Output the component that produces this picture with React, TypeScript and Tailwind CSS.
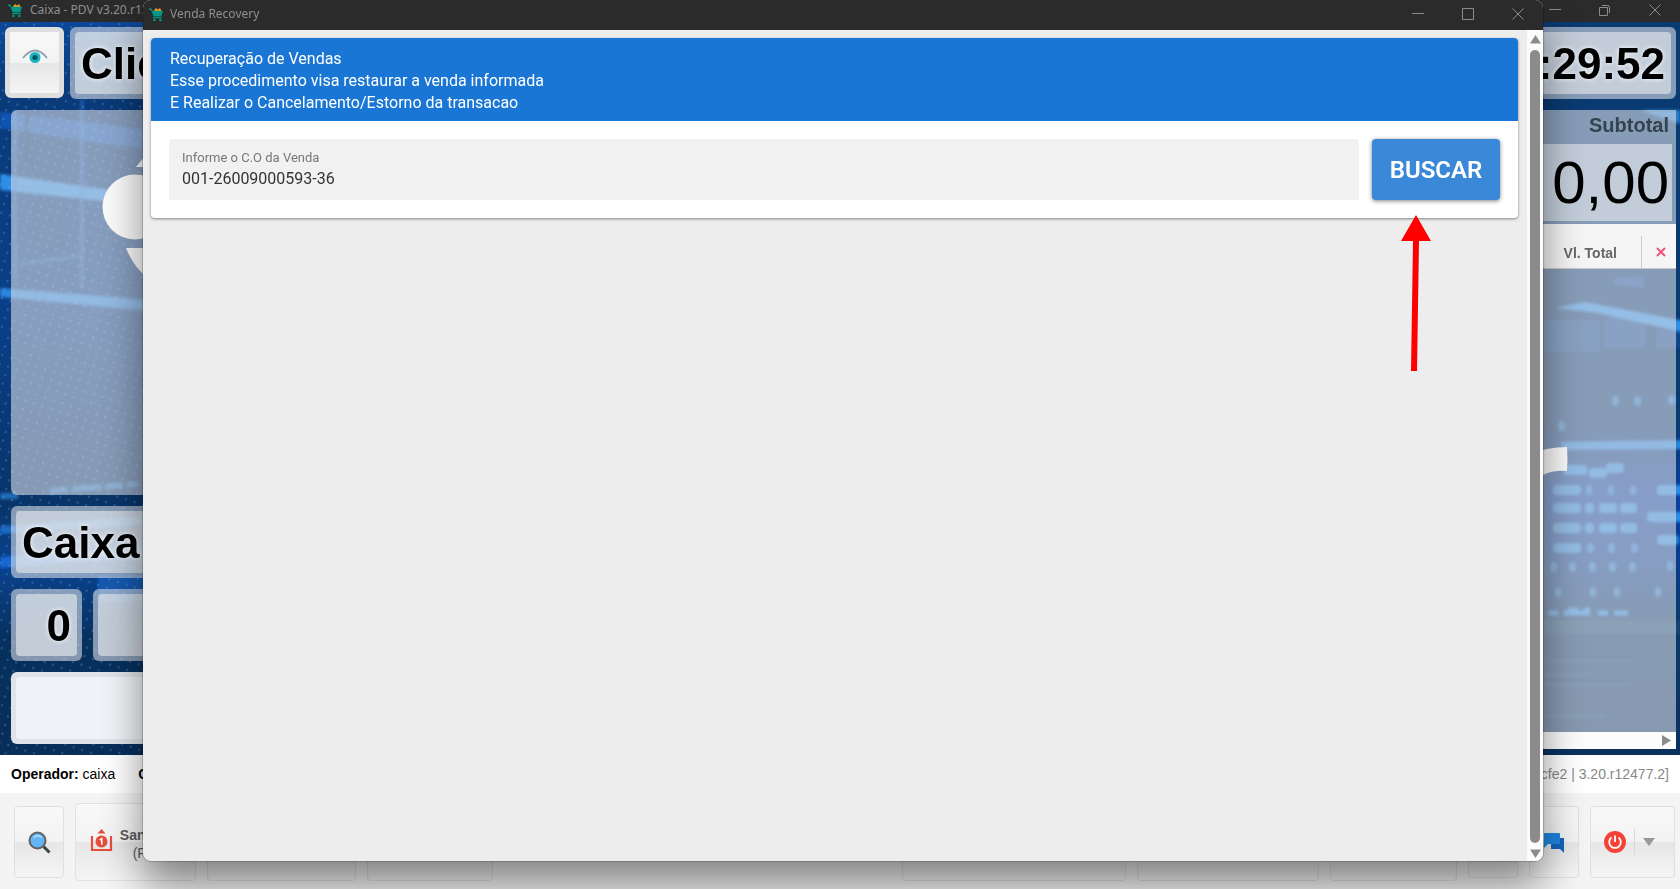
import { useState } from "react";
import type { ReactNode } from "react";

const panel =
  "rounded-md bg-[#dadee6]/60 p-[5px] text-[44px] font-bold leading-none text-black";
const panelInner =
  "flex h-full items-center rounded bg-[#ebeef0]/60 px-[6px] pt-[2px] [text-shadow:0_0_5px_#fff]";
const toolButton =
  "flex shrink-0 items-center justify-center rounded border border-[#e0e0e0] bg-[linear-gradient(#f8f8f8,#f3f3f3_50%,#e6e6e6_50%,#f5f5f5)]";

function CartIcon() {
  return (
    <svg width="15" height="15" viewBox="0 0 15 15" className="shrink-0">
      <path d="M5 3.5 7 1l2 1.5L11 1l1.5 3H5z" fill="#f39a1e" />
      <path d="M0 1.5h2.6l.8 2.2H14l-1.6 5.6H4.6L2 3H0z" fill="#009688" />
      <path d="M4.3 9.8h8.4v1.4H4z" fill="#009688" />
      <circle cx="5.4" cy="13" r="1.3" fill="#009688" />
      <circle cx="11.4" cy="13" r="1.3" fill="#009688" />
    </svg>
  );
}

function WindowControls({ restored }: { restored?: boolean }) {
  const control = "flex h-full w-[50px] items-center justify-center";
  return (
    <div className="flex h-full text-[#8c8c8c]">
      <button className={control} aria-label="Minimizar">
        <svg width="12" height="12" viewBox="0 0 12 12" stroke="currentColor">
          <path d="M0 5.5h12" />
        </svg>
      </button>
      <button className={control} aria-label="Maximizar">
        <svg width="12" height="12" viewBox="0 0 12 12" fill="none" stroke="currentColor">
          {restored ? (
            <path d="M.5 3.5h8v8h-8zM3 1.5h5.5a2 2 0 0 1 2 2V9" />
          ) : (
            <path d="M.5.5h11v11H.5z" />
          )}
        </svg>
      </button>
      <button className={control} aria-label="Fechar">
        <svg width="12" height="12" viewBox="0 0 12 12" stroke="currentColor">
          <path d="m.5.5 11 11m0-11-11 11" />
        </svg>
      </button>
    </div>
  );
}

function TitleBar({ children, className }: { children: ReactNode; className: string }) {
  return (
    <header
      className={`flex shrink-0 items-center justify-between bg-[#2b2b2b] pb-[2px] font-['Noto_Sans',sans-serif] text-xs text-[#8f8f8f] ${className}`}
    >
      {children}
    </header>
  );
}

const lights = [
  [1553, 490, 28], [1586, 490, 6], [1608, 490, 6], [1630, 490, 6], [1657, 490, 84],
  [1553, 508, 28], [1585, 508, 9], [1599, 508, 18], [1620, 508, 17], [1647, 517, 40],
  [1553, 528, 28], [1585, 528, 9], [1599, 528, 18], [1620, 528, 17], [1657, 540, 22],
  [1553, 548, 28], [1587, 548, 7], [1608, 548, 7], [1631, 548, 7],
  [1550, 567, 7], [1569, 567, 7], [1589, 567, 7], [1609, 567, 7], [1629, 567, 7],
  [1667, 566, 6], [1555, 592, 6], [1590, 592, 6], [1614, 592, 6], [1655, 592, 6],
  [1612, 401, 7], [1634, 401, 7], [1668, 400, 7], [1558, 426, 7],
  [1563, 470, 24], [1589, 473, 18], [1606, 468, 18],
];

function Backdrop() {
  return (
    <svg
      className="absolute inset-0 h-full w-full"
      viewBox="0 22 1680 733"
      preserveAspectRatio="none"
    >
      <defs>
        <linearGradient id="sky" x1="0" y1="0" x2="0" y2="1">
          <stop offset="0" stopColor="#0c4798" />
          <stop offset=".1" stopColor="#0a3a78" />
          <stop offset=".4" stopColor="#0a3f88" />
          <stop offset=".66" stopColor="#083468" />
          <stop offset=".74" stopColor="#0a4390" />
          <stop offset=".84" stopColor="#07305e" />
          <stop offset="1" stopColor="#082e5a" />
        </linearGradient>
        <linearGradient id="room" x1="0" y1="0" x2="0" y2="1">
          <stop offset="0" stopColor="#0a3a72" />
          <stop offset=".55" stopColor="#0a3a72" />
          <stop offset=".65" stopColor="#0a3fa0" />
          <stop offset=".74" stopColor="#0a3c8a" />
          <stop offset=".82" stopColor="#0b3a6a" />
          <stop offset="1" stopColor="#09325e" />
        </linearGradient>
        <pattern
          id="dots"
          width="9"
          height="9"
          patternUnits="userSpaceOnUse"
          patternTransform="rotate(18)"
        >
          <circle cx="4" cy="4" r="1.2" fill="#6fb0ee" opacity=".3" />
        </pattern>
        <filter id="soft">
          <feGaussianBlur stdDeviation="1.6" />
        </filter>
      </defs>
      <rect y="22" width="800" height="733" fill="url(#sky)" />
      <rect x="800" y="22" width="880" height="733" fill="url(#room)" />
      <g filter="url(#soft)">
        <path d="M0 112 150 130v20L0 128z" fill="#1560cc" opacity=".7" />
        <path d="M0 174 150 196v10L0 190z" fill="#2f8fe6" />
        <path d="M0 288 150 300v11L0 297z" fill="#2a86de" />
        <path d="M82 99v190M15 110v170" stroke="#2a74d4" strokeWidth="4" opacity=".5" />
        <path d="M20 264 80 256" stroke="#2a74d4" strokeWidth="3" opacity=".5" />
        <path d="M27 112v50" stroke="#0a2c5c" strokeWidth="4" opacity=".6" />
        <path d="M0 496h20M50 491 138 484" stroke="#2a86de" strokeWidth="6" opacity=".7" strokeDasharray="18 4 30 3" />
        <path d="M0 526 150 516v8L0 534z" fill="#2580e6" opacity=".7" />
        <path d="M0 557 150 546v10L0 568z" fill="#1672e6" opacity=".8" />
        <path d="M98 576h50v26H98z" fill="#1b6ccc" opacity=".6" />
        <path d="M1540 320v32h60v-32zM1604 318v30h42v-34zM1656 330h24v18h-24z" fill="#1652a8" opacity=".5" />
        <path d="M1555 308 1585 302 1690 322v12L1598 313z" fill="#2f8fe6" />
        <path d="M1614 278l30-2v12l-30-4z" fill="#1d5cc0" opacity=".6" />
        <path d="M1640 110h40v14z" fill="#2f8fe6" opacity=".8" />
        <path d="M1560 442 1690 440v9L1564 450z" fill="#2a86de" />
        <path d="M1548 613h80M1568 610h22" stroke="#2f8fe6" strokeWidth="5" strokeDasharray="10 6 26 8" />
        <path d="M1543 620h137v14h-137z" fill="#1d5278" opacity=".5" />
        <path d="M1545 661h90M1545 675h45M1545 685h85M1545 716h60" stroke="#1d5580" strokeWidth="3" opacity=".5" />
        {lights.map(([x, y, w]) => (
          <rect
            key={`${x}-${y}`}
            x={x}
            y={y - 5}
            width={w}
            height="10"
            rx="4"
            fill="#2f93ea"
            opacity={w < 8 ? 0.7 : 0.9}
          />
        ))}
      </g>
      <rect y="22" width="800" height="733" fill="url(#dots)" />
    </svg>
  );
}

/* Brand mark that sits over both columns */
function Watermark() {
  return (
    <svg
      className="pointer-events-none absolute inset-0 h-full w-full"
      viewBox="0 22 1680 733"
      preserveAspectRatio="none"
      fill="#fafafa"
    >
      <circle cx="135" cy="207" r="32.5" />
      <path d="M136 167 150 150v17z" />
      <path d="M126 248h30v30h-8q-14-10-22-30z" />
      <path d="M1530 454q18-7 37-7 1 12 0 24-14-1-24 4h-13z" />
    </svg>
  );
}

function Register() {
  return (
    <div className="relative flex min-h-0 flex-1 flex-col">
      <Backdrop />
      <div className="relative flex gap-[6px] pt-[5px] pr-1 pl-[5px]">
        <button
          aria-label="Visualizar"
          className="flex h-[71px] w-[59px] items-center justify-center rounded-md border-[5px] border-[#dedede] bg-[linear-gradient(#f8f8f8,#f3f3f3_50%,#e6e6e6_50%,#f5f5f5)] pb-3"
        >
          <svg width="26" height="18" viewBox="0 0 26 18">
            <path d="M2 9Q13-2 24 9 13 19 2 9z" fill="#f3f8fa" />
            <circle cx="13" cy="9.500" r="5.500" fill="#1fb4c4" />
            <circle cx="13" cy="9.500" r="2.600" fill="#00565f" />
            <path d="M1 10Q13-5 25 10" fill="none" stroke="#90a4ae" strokeWidth="2" />
          </svg>
        </button>
        <div className={`${panel} h-[72px] flex-1`}>
          <div className={panelInner}>Clie</div>
        </div>
        <div className={`${panel} h-[72px] w-[300px]`}>
          <div className={`${panelInner} justify-end`}>08:29:52</div>
        </div>
      </div>

      <div className="relative mt-[11px] flex min-h-0 flex-1 gap-[11px] pr-1 pl-[11px]">
        <div className="flex w-[430px] flex-col gap-[11px] pb-[11px]">
          <div className="flex-1 rounded-md bg-[#dadee6]/60" />
          <div className={`${panel} h-[72px]`}>
            <div className={panelInner}>Caixa</div>
          </div>
          <div className="flex gap-[11px]">
            <div className={`${panel} h-[72px] w-[71px]`}>
              <div className={`${panelInner} justify-end`}>0</div>
            </div>
            <div className={`${panel} h-[72px] flex-1`}>
              <div className={panelInner} />
            </div>
          </div>
          <div className="h-[72px] rounded-md bg-[#e0e4ea] p-[5px]">
            <div className="h-full rounded bg-[#eff2f6]" />
          </div>
        </div>

        <div className="mb-[6px] flex min-w-0 flex-1 flex-col">
          <div className="bg-[#dadee6]/60 pr-1 pb-[3px]">
            <div className="flex h-[34px] items-center justify-end pr-[3px] pb-1 text-xl font-bold text-[#34444f]">
              Subtotal
            </div>
            <div className="flex h-[77px] items-center justify-end bg-[#ebeef0]/60 pr-[3px] text-[60px] leading-none text-black">
              0,00
            </div>
          </div>
          <div className="flex h-[45px] items-end justify-end border-b border-[#c8c8c8] bg-[#f5f5f5] text-sm font-bold text-[#666]">
            <div className="flex h-8 items-center pt-[2px] pr-6">Vl. Total</div>
            <div className="flex h-8 w-[35px] items-center justify-center border-l border-[#ccc] pl-1">
              <svg width="10" height="10" viewBox="0 0 10 10" stroke="#f4517f" strokeWidth="2">
                <path d="m1 1 8 8m0-8-8 8" />
              </svg>
            </div>
          </div>
          <div className="flex-1 bg-[#dadee6]/60" />
          <div className="flex h-[17px] items-center justify-end bg-[#fcfcfc] pr-[5px]">
            <svg width="9" height="11" viewBox="0 0 9 11" fill="#8b8b8b">
              <path d="M0 0 9 5.500 0 11z" />
            </svg>
          </div>
        </div>
      </div>
      <Watermark />
    </div>
  );
}

function StatusBar() {
  return (
    <div className="flex h-[38px] shrink-0 items-center justify-between bg-white px-[11px] text-sm text-black">
      <div className="flex gap-[23px]">
        <span>
          <b>Operador:</b> caixa
        </span>
        <b>C</b>
      </div>
      <span className="text-[#888]">[cfe2 | 3.20.r12477.2]</span>
    </div>
  );
}

function Toolbar() {
  return (
    <div className="flex h-24 shrink-0 items-center justify-between bg-[#f4f4f4] pt-[2px] pr-[5px] pl-[14px] text-sm text-[#5c5c5c]">
      <div className="flex items-center gap-[11px]">
        <button className={`${toolButton} h-[72px] w-[50px]`} aria-label="Pesquisar">
          <svg width="23" height="23" viewBox="0 0 23 23">
            <path d="m14 14 3 3" stroke="#616161" strokeWidth="2.500" />
            <path d="m16 16 5.500 5.500" stroke="#37474f" strokeWidth="3" />
            <circle cx="9.500" cy="9.500" r="8" fill="#64b5f6" stroke="#616161" strokeWidth="2" />
            <path d="M5.500 6.500q4-3.500 8 0" fill="none" stroke="#bbdefb" strokeWidth="1.500" />
          </svg>
        </button>
        <button className={`${toolButton} h-[78px] w-[121px] gap-[7px] pr-[10px]`}>
          <svg width="23" height="23" viewBox="0 0 23 23" className="mb-1">
            <path d="M2 7v14h19V7" fill="none" stroke="#e74c3c" strokeWidth="2.200" />
            <path d="M7.500 4.500 11.500 0l4 4.500z" fill="#e74c3c" />
            <circle cx="11.500" cy="12.500" r="6" fill="#e74c3c" />
            <path d="M9.800 11 11.800 9.700v6" fill="none" stroke="#fff" strokeWidth="1.500" />
          </svg>
          <span className="pt-1 leading-[18px]">
            <b>Sangria</b>
            <br />
            (F5)
          </span>
        </button>
        <div className={`${toolButton} h-[78px] w-[149px]`} />
        <div className={`${toolButton} h-[78px] w-[126px]`} />
      </div>
      <div className="flex items-center gap-[11px]">
        <div className={`${toolButton} h-[78px] w-[224px]`} />
        <div className={`${toolButton} h-[78px] w-[182px]`} />
        <div className={`${toolButton} h-[78px] w-[127px]`} />
        <div className={`${toolButton} h-[72px] w-[50px]`} />
        <button className={`${toolButton} h-[72px] w-[50px]`} aria-label="Mensagens">
          <svg width="22" height="22" viewBox="0 0 22 22">
            <path d="M9 7h12v15l-4-4H8V8z" fill="#1565c0" />
            <path d="M2 2h14q1 0 1 1v9q0 1-1 1H5l-4 4V3q0-1 1-1z" fill="#1e88e5" />
          </svg>
        </button>
        <button
          className={`${toolButton} h-[72px] w-[85px] gap-2 pr-[6px]`}
          aria-label="Sair"
        >
          <svg width="22" height="22" viewBox="0 0 22 22" fill="none" stroke="#fff" strokeWidth="1.800">
            <circle cx="11" cy="11" r="11" fill="#f44336" stroke="none" />
            <path d="M7.500 6.500a5.800 5.800 0 1 0 7 0M11 4.500V11" />
          </svg>
          <span className="h-[26px] w-px bg-[#d9d9d9]" />
          <svg width="12" height="8" viewBox="0 0 12 8" fill="#999">
            <path d="M0 0h12L6 8z" />
          </svg>
        </button>
      </div>
    </div>
  );
}

function RecoveryWindow() {
  const [code, setCode] = useState("001-26009000593-36");

  return (
    <section className="absolute top-0 right-[137px] bottom-7 left-[143px] flex flex-col overflow-hidden rounded-lg bg-[#ededed] font-[Roboto,sans-serif] shadow-[0_24px_40px_rgba(0,0,0,0.45),0_0_1px_1px_rgba(0,0,0,0.2)]">
      <TitleBar className="h-[30px] pl-[6px]">
        <div className="flex items-center gap-[6px]">
          <CartIcon />
          <span>Venda Recovery</span>
        </div>
        <WindowControls />
      </TitleBar>
      <div className="flex min-h-0 flex-1">
        <main className="min-w-0 flex-1 py-2 pr-[9px] pl-2">
          <div className="rounded bg-white shadow-[0_1px_3px_rgba(0,0,0,0.45)]">
            <div className="rounded-t bg-[#1976d4] px-[19px] pt-[10px] pb-[7px] text-base leading-[22px] text-white">
              <p>Recuperação de Vendas</p>
              <p>Esse procedimento visa restaurar a venda informada</p>
              <p>E Realizar o Cancelamento/Estorno da transacao</p>
            </div>
            <form
              className="flex gap-[13px] p-[18px]"
              onSubmit={(e) => e.preventDefault()}
            >
              <div className="flex h-[61px] flex-1 flex-col rounded-t bg-[#f1f1f1] px-[13px] pt-[10px]">
                <label htmlFor="co" className="text-[13px] leading-[18px] text-[#777]">
                  Informe o C.O da Venda
                </label>
                <input
                  id="co"
                  className="h-6 bg-transparent text-base text-[#333] outline-none"
                  value={code}
                  onChange={(e) => setCode(e.target.value)}
                />
              </div>
              <div className="relative">
                <button className="h-[61px] w-32 rounded bg-[#3a88d8] text-2xl font-semibold text-white shadow-[0_1px_4px_rgba(0,0,0,0.5)]">
                  BUSCAR
                </button>
                <svg
                  className="absolute top-[76px] left-[29px]"
                  width="30"
                  height="157"
                  viewBox="0 0 30 157"
                  fill="#f00"
                >
                  <path d="M15 0 30 26H18L16 156h-6L12 26H0z" />
                </svg>
              </div>
            </form>
          </div>
        </main>
        <div className="flex w-4 flex-col items-center justify-between bg-[#fcfcfc] pt-[5px] pb-[3px]">
          <svg width="11" height="9" viewBox="0 0 11 9" fill="#8b8b8b">
            <path d="M5.500 0 11 8.500H0z" />
          </svg>
          <div className="my-[6px] w-[10px] flex-1 rounded-full bg-[#8b8b8b]" />
          <svg width="11" height="9" viewBox="0 0 11 9" fill="#8b8b8b">
            <path d="M0 .5h11L5.500 9z" />
          </svg>
        </div>
      </div>
    </section>
  );
}

export default function App() {
  return (
    <div className="relative flex h-screen flex-col overflow-hidden font-['Liberation_Sans',Arial,sans-serif]">
      <TitleBar className="h-[22px] pl-2">
        <div className="flex items-center gap-[7px]">
          <CartIcon />
          <span>Caixa - PDV v3.20.r12477</span>
        </div>
        <WindowControls restored />
      </TitleBar>
      <Register />
      <StatusBar />
      <Toolbar />
      <RecoveryWindow />
    </div>
  );
}
